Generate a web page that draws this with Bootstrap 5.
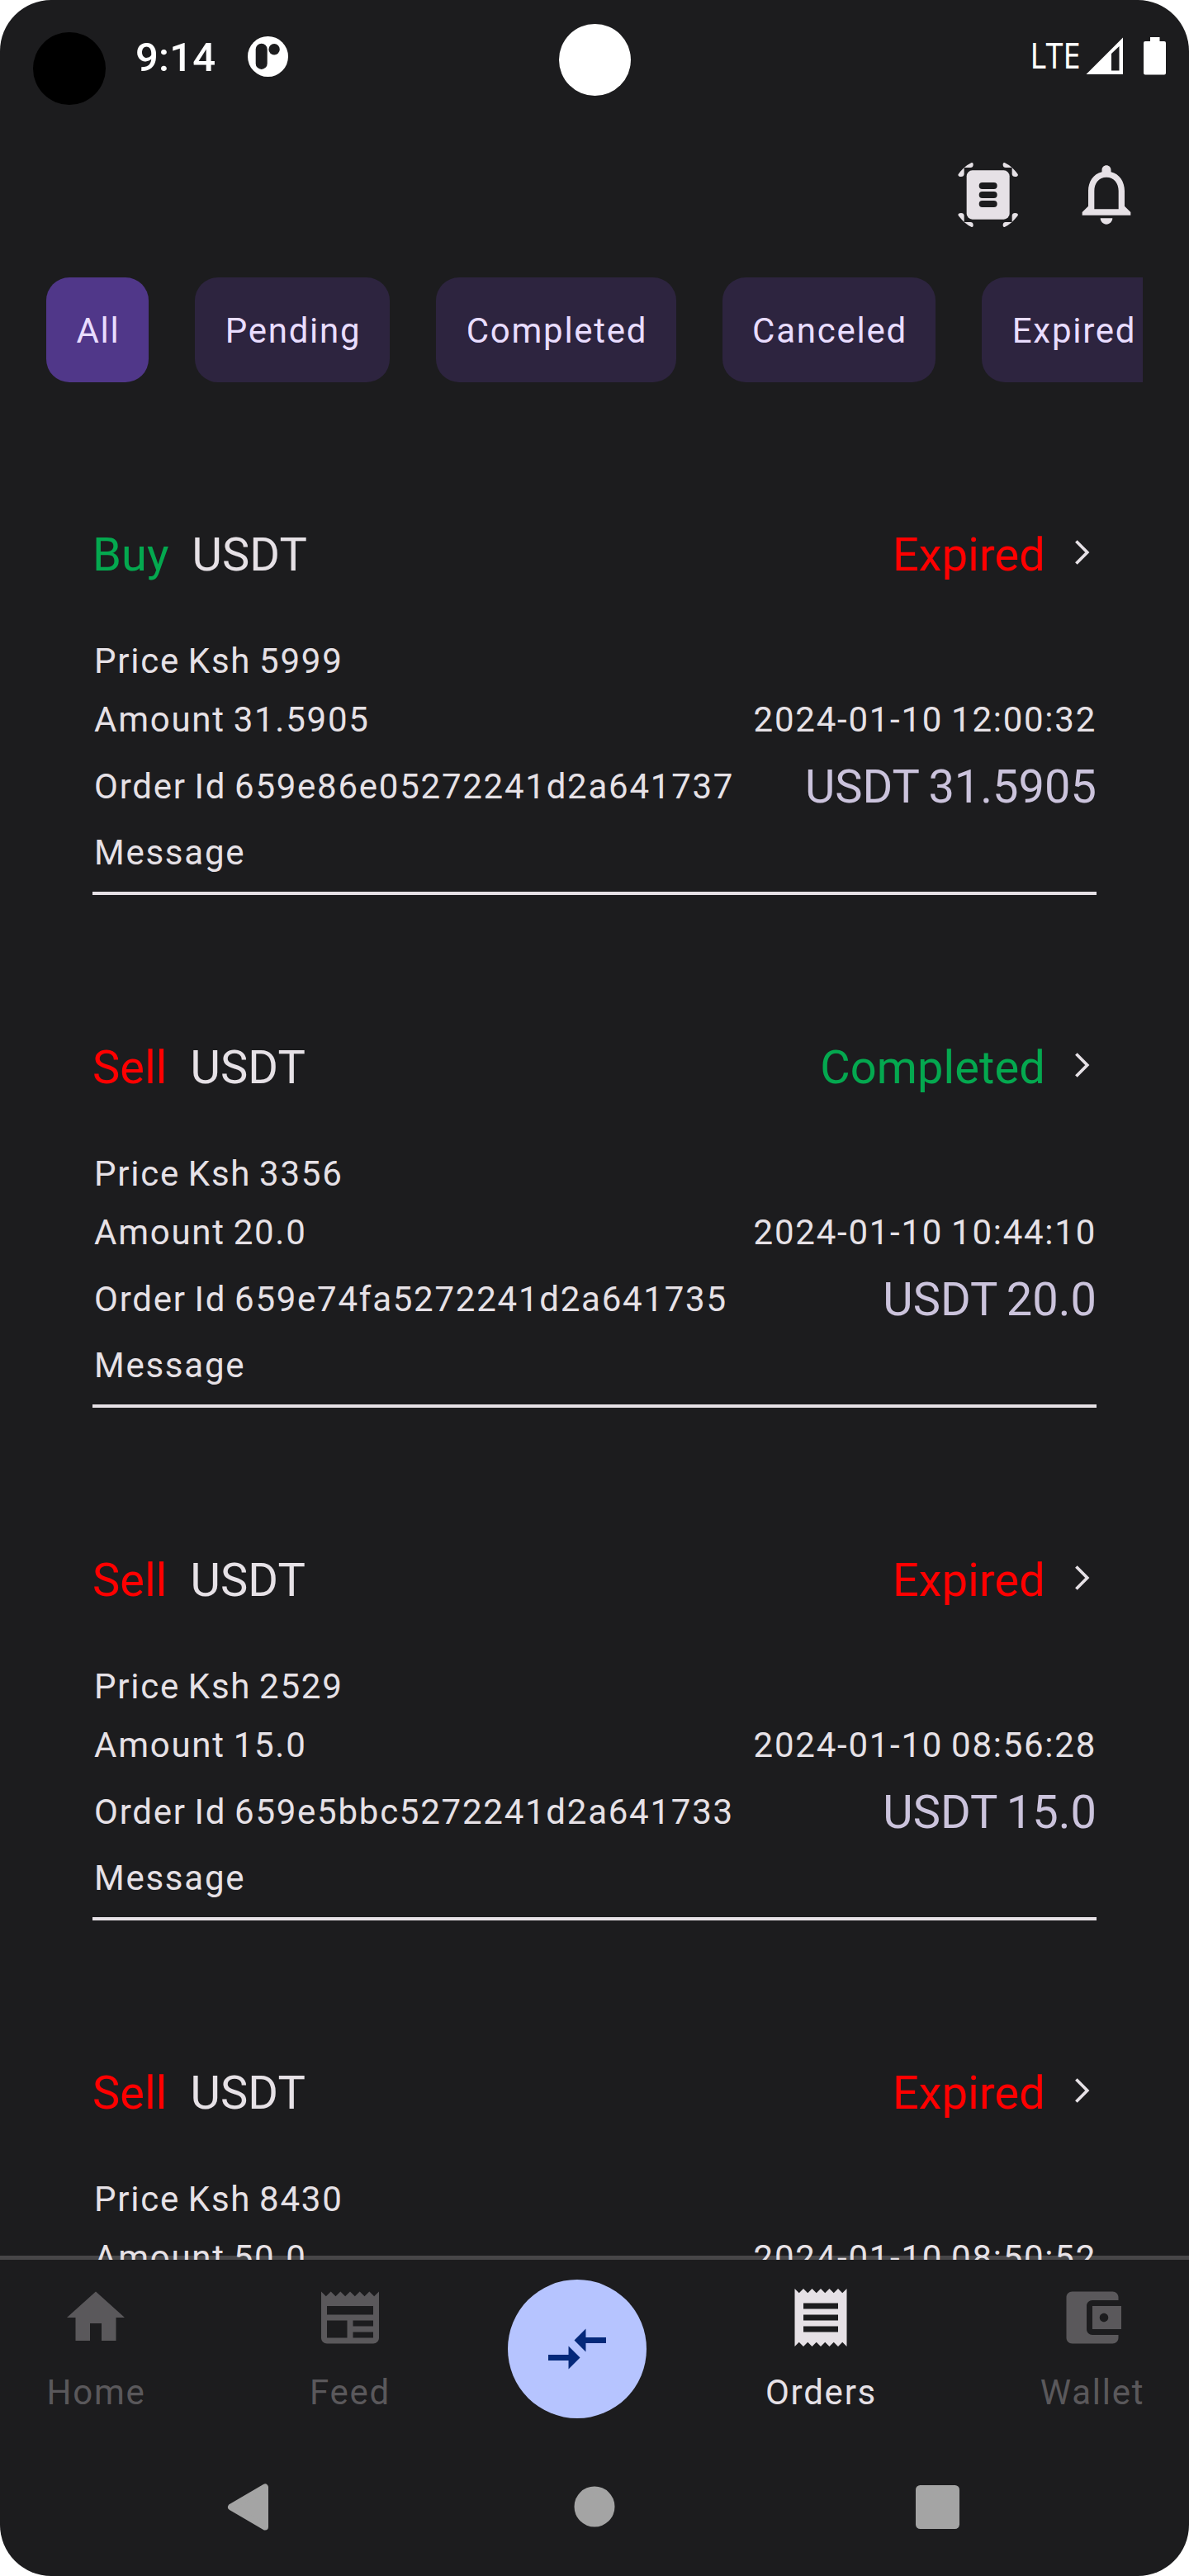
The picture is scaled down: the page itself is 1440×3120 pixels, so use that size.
<!DOCTYPE html>
<html lang="en">
<head>
<meta charset="utf-8">
<meta name="viewport" content="width=device-width, initial-scale=1">
<title>Orders</title>
<link href="https://cdn.jsdelivr.net/npm/bootstrap@5.3.0/dist/css/bootstrap.min.css" rel="stylesheet">
<style>
  body { background: #fff; font-family: Roboto, "Noto Sans", sans-serif; }
  svg { display: block; flex: none; }
  .phone { width: 1440px; height: 3120px; border-radius: 62px; background: #1c1c1e; color: #e6e1e6; font-size: 42px; line-height: 56px; letter-spacing: 1.75px; word-spacing: -2.3px; }

  /* system status bar */
  .status-bar { height: 150px; padding: 29px 28px 0 40px; color: #fff; }
  .status-side { width: 637px; }
  .avatar-dot { width: 88px; height: 88px; margin-top: 10px; background: #000; }
  .camera-dot { width: 87px; height: 87px; background: #fff; }
  .clock { margin: 13px 0 0 36px; font-size: 49px; font-weight: 500; letter-spacing: 0.2px; width: 99px; }
  .app-mark { margin: 15px 0 0 37px; }

  .top-actions { height: 186px; padding: 41px 56px 0 0; }
  .scan-icon { margin: 5px 63px 0 0; }

  /* filter chips */
  .chips { margin: 0 56px; height: 127px; gap: 56px; }
  .chip { flex: none; height: 127px; padding: 3px 0 0 2px; border: 0; border-radius: 28px; background: #2d243f; color: #e9ddff; font-size: 42px; line-height: 56px; letter-spacing: 1.75px; }
  .chip:hover { background: #2d243f; color: #e9ddff; }
  .chip.active { background: #503789 !important; color: #e9ddff !important; }
  .w-all { width: 124px; } .w-pending { width: 236px; } .w-completed { width: 291px; } .w-canceled { width: 258px; } .w-expired { width: 222px; }

  .orders { height: 2274px; padding-top: 99px; background: linear-gradient(#474648, #474648) left bottom / 100% 5px no-repeat; }
  .order { height: 621px; padding: 60px 112px 0; }
  .order-head { height: 100px; margin-bottom: 43px; font-size: 56px; letter-spacing: 0.1px; }
  .coin { margin-left: 28px; }
  .chevron { margin: 0 8px 6px 36px; }
  .line-a { height: 71px; }
  .line-b { height: 91px; }
  .line-c { height: 69px; }
  .ink { padding-left: 2px; }
  .rule { height: 4px; margin-top: 13px; background: #e6e1e6; }
  .total { font-size: 56px; letter-spacing: 0; color: #cbc3dc; }
  .buy { color: #04a84f; }
  .sell { color: #ff0000; }

  /* bottom navigation */
  .tabs { display: grid; grid-template-columns: 232px 383px 168px 422px 235px; height: 216px; }
  .tab { padding-top: 28px; color: #5a585b; text-decoration: none; }
  .tab span { margin-top: 21px; padding-left: 1px; }
  .tab.current { color: #e6e1e6; }
  .fab { width: 168px; height: 168px; margin-top: 24px; border: 0; background: #b6c4ff; color: #05297a; }
  .sys-nav { height: 167px; padding: 0 278px 1px 275px; }
  .sys-home { margin-left: 6px; }
</style>
</head>
<body>
<div class="phone overflow-hidden d-flex flex-column">
  <header class="status-bar d-flex align-items-start">
    <div class="status-side d-flex align-items-start">
      <div class="avatar-dot rounded-circle"></div>
      <div class="clock">9:14</div>
      <svg class="app-mark" width="49" height="49" viewBox="0 0 49 49"><circle cx="24.5" cy="24.5" r="24.5" fill="#fff"/><rect x="9.7" y="8.7" width="14" height="31.2" rx="7" fill="#1c1c1e"/><circle cx="32.1" cy="15.8" r="6.7" fill="#1c1c1e"/></svg>
    </div>
    <div class="camera-dot rounded-circle"></div>
    <svg class="ms-auto" width="182" height="70" viewBox="1230 29 182 70" fill="#fff">
      <text x="1247.5" y="82.7" font-size="43" textLength="61" lengthAdjust="spacingAndGlyphs" letter-spacing="0" font-family="Noto Sans, sans-serif">LTE</text>
      <path fill-rule="evenodd" d="M1315.5 90L1360 45.500V90ZM1346 65V85.500H1355.500V56Z"/>
      <path d="M1393 45H1404.500V50H1410Q1412 50 1412 52V88.500Q1412 90.500 1410 90.500H1387Q1385 90.500 1385 88.500V52Q1385 50 1387 50H1393Z"/>
    </svg>
  </header>

  <div class="top-actions d-flex justify-content-end align-items-start">
    <svg class="scan-icon" width="73.33" height="80" viewBox="58 48 220 240" fill="#e6e1e6">
      <defs><path id="corner" d="M81 69V93Q80 102 70 102Q60 102 59 95Q62 88 81 69ZM81 69Q95 57 108 51Q114 50 114 56V60Q113 69 104 69Z"/></defs>
      <use href="#corner"/>
      <use href="#corner" transform="translate(336 0) scale(-1 1)"/>
      <use href="#corner" transform="translate(0 336) scale(1 -1)"/>
      <use href="#corner" transform="translate(336 336) scale(-1 -1)"/>
      <rect x="90" y="79" width="156" height="178" rx="21"/>
      <g fill="#1c1c1e"><rect x="135" y="123" width="66" height="24" rx="12"/><rect x="135" y="156" width="66" height="24" rx="12"/><rect x="135" y="189" width="66" height="24" rx="12"/></g>
    </svg>
    <svg width="88" height="88" viewBox="0 0 24 24" fill="#e6e1e6"><path d="M12 22c1.100 0 2-.9 2-2h-4c0 1.100.9 2 2 2zm6-6v-5c0-3.070-1.630-5.640-4.500-6.320V4c0-.83-.67-1.500-1.500-1.500s-1.500.67-1.500 1.500v.68C7.640 5.360 6 7.920 6 11v5l-2 2v1h16v-1l-2-2zm-2 1H8v-6c0-2.480 1.510-4.500 4-4.500s4 2.020 4 4.500v6z"/></svg>
  </div>

  <div class="chips d-flex overflow-hidden">
    <button class="btn chip w-all active">All</button>
    <button class="btn chip w-pending">Pending</button>
    <button class="btn chip w-completed">Completed</button>
    <button class="btn chip w-canceled">Canceled</button>
    <button class="btn chip w-expired">Expired</button>
  </div>

  <main class="orders overflow-hidden">
    <article class="order">
      <div class="order-head d-flex align-items-center"><span class="buy">Buy</span><span class="coin">USDT</span><span class="sell ms-auto">Expired</span><svg class="chevron" width="18" height="30" viewBox="0 0 18 30" fill="none" stroke="#e6e1e6" stroke-width="3.700"><path d="M1.400 1.500L14.800 15L1.400 28.500"/></svg></div>
      <div class="line-a ink d-flex align-items-center">Price Ksh 5999</div>
      <div class="line-a ink d-flex align-items-center justify-content-between"><span>Amount 31.5905</span><span>2024-01-10 12:00:32</span></div>
      <div class="line-b ink d-flex align-items-center justify-content-between"><span>Order Id 659e86e05272241d2a641737</span><span class="total">USDT 31.5905</span></div>
      <div class="line-c ink d-flex align-items-center">Message</div>
      <div class="rule"></div>
    </article>
    <article class="order">
      <div class="order-head d-flex align-items-center"><span class="sell">Sell</span><span class="coin">USDT</span><span class="buy ms-auto">Completed</span><svg class="chevron" width="18" height="30" viewBox="0 0 18 30" fill="none" stroke="#e6e1e6" stroke-width="3.700"><path d="M1.400 1.500L14.800 15L1.400 28.500"/></svg></div>
      <div class="line-a ink d-flex align-items-center">Price Ksh 3356</div>
      <div class="line-a ink d-flex align-items-center justify-content-between"><span>Amount 20.0</span><span>2024-01-10 10:44:10</span></div>
      <div class="line-b ink d-flex align-items-center justify-content-between"><span>Order Id 659e74fa5272241d2a641735</span><span class="total">USDT 20.0</span></div>
      <div class="line-c ink d-flex align-items-center">Message</div>
      <div class="rule"></div>
    </article>
    <article class="order">
      <div class="order-head d-flex align-items-center"><span class="sell">Sell</span><span class="coin">USDT</span><span class="sell ms-auto">Expired</span><svg class="chevron" width="18" height="30" viewBox="0 0 18 30" fill="none" stroke="#e6e1e6" stroke-width="3.700"><path d="M1.400 1.500L14.800 15L1.400 28.500"/></svg></div>
      <div class="line-a ink d-flex align-items-center">Price Ksh 2529</div>
      <div class="line-a ink d-flex align-items-center justify-content-between"><span>Amount 15.0</span><span>2024-01-10 08:56:28</span></div>
      <div class="line-b ink d-flex align-items-center justify-content-between"><span>Order Id 659e5bbc5272241d2a641733</span><span class="total">USDT 15.0</span></div>
      <div class="line-c ink d-flex align-items-center">Message</div>
      <div class="rule"></div>
    </article>
    <article class="order">
      <div class="order-head d-flex align-items-center"><span class="sell">Sell</span><span class="coin">USDT</span><span class="sell ms-auto">Expired</span><svg class="chevron" width="18" height="30" viewBox="0 0 18 30" fill="none" stroke="#e6e1e6" stroke-width="3.700"><path d="M1.400 1.500L14.800 15L1.400 28.500"/></svg></div>
      <div class="line-a ink d-flex align-items-center">Price Ksh 8430</div>
      <div class="line-a ink d-flex align-items-center justify-content-between"><span>Amount 50.0</span><span>2024-01-10 08:50:52</span></div>
    </article>
  </main>

  <nav class="tabs">
    <a class="tab d-flex flex-column align-items-center" href="#"><svg width="84" height="84" viewBox="0 0 24 24" fill="currentColor"><path d="M10 20v-6h4v6h5v-8h3L12 3 2 12h3v8z"/></svg><span>Home</span></a>
    <a class="tab d-flex flex-column align-items-center" href="#"><svg width="84" height="84" viewBox="0 0 24 24" fill="currentColor"><path d="M22 3l-1.670 1.670L18.670 3 17 4.670 15.330 3l-1.660 1.670L12 3l-1.670 1.670L8.670 3 7 4.670 5.330 3 3.670 4.670 2 3v16c0 1.100.9 2 2 2h16c1.100 0 2-.9 2-2V3zM11 19H4v-6h7v6zm9 0h-7v-2h7v2zm0-4h-7v-2h7v2zm0-4H4V8h16v3z"/></svg><span>Feed</span></a>
    <button class="fab rounded-circle d-flex align-items-center justify-content-center p-0" aria-label="Swap"><svg width="84" height="84" viewBox="0 0 24 24" fill="currentColor"><path d="M9.010 14H2v2h7.010v3L13 15l-3.990-4v3zm5.980-1v-3H22V8h-7.010V5L11 9l3.990 4z"/></svg></button>
    <a class="tab current d-flex flex-column align-items-center" href="#"><svg width="84" height="84" viewBox="0 0 24 24" fill="currentColor"><path d="M18 17H6v-2h12v2zm0-4H6v-2h12v2zm0-4H6V7h12v2zM3 22l1.500-1.500L6 22l1.500-1.500L9 22l1.500-1.500L12 22l1.500-1.500L15 22l1.500-1.500L18 22l1.500-1.500L21 22V2l-1.500 1.500L18 2l-1.500 1.500L15 2l-1.500 1.500L12 2l-1.500 1.500L9 2 7.500 3.500 6 2 4.500 3.500 3 2v20z"/></svg><span>Orders</span></a>
    <a class="tab d-flex flex-column align-items-center" href="#"><svg width="84" height="84" viewBox="0 0 24 24" fill="currentColor"><path d="M21 18v1c0 1.100-.9 2-2 2H5c-1.110 0-2-.9-2-2V5c0-1.100.89-2 2-2h14c1.100 0 2 .9 2 2v1h-9c-1.110 0-2 .9-2 2v8c0 1.100.89 2 2 2h9zm-9-2h10V8H12v8zm4-2.500c-.83 0-1.500-.67-1.500-1.500s.67-1.500 1.500-1.500 1.500.67 1.500 1.500-.67 1.500-1.500 1.500z"/></svg><span>Wallet</span></a>
  </nav>

  <div class="sys-nav d-flex align-items-center justify-content-between">
    <svg width="50" height="57" viewBox="0 0 50 57" fill="#a4a4a4" stroke="#a4a4a4" stroke-width="8" stroke-linejoin="round"><path d="M5 28.500L46 4.500V52.500Z"/></svg>
    <svg class="sys-home" width="50" height="50" viewBox="0 0 50 50" fill="#a4a4a4"><circle cx="25" cy="25" r="24.500"/></svg>
    <svg width="53" height="53" viewBox="0 0 53 53" fill="#a4a4a4"><rect width="53" height="53" rx="5.500"/></svg>
  </div>
</div>
<script src="https://cdn.jsdelivr.net/npm/bootstrap@5.3.0/dist/js/bootstrap.bundle.min.js"></script>
</body>
</html>
